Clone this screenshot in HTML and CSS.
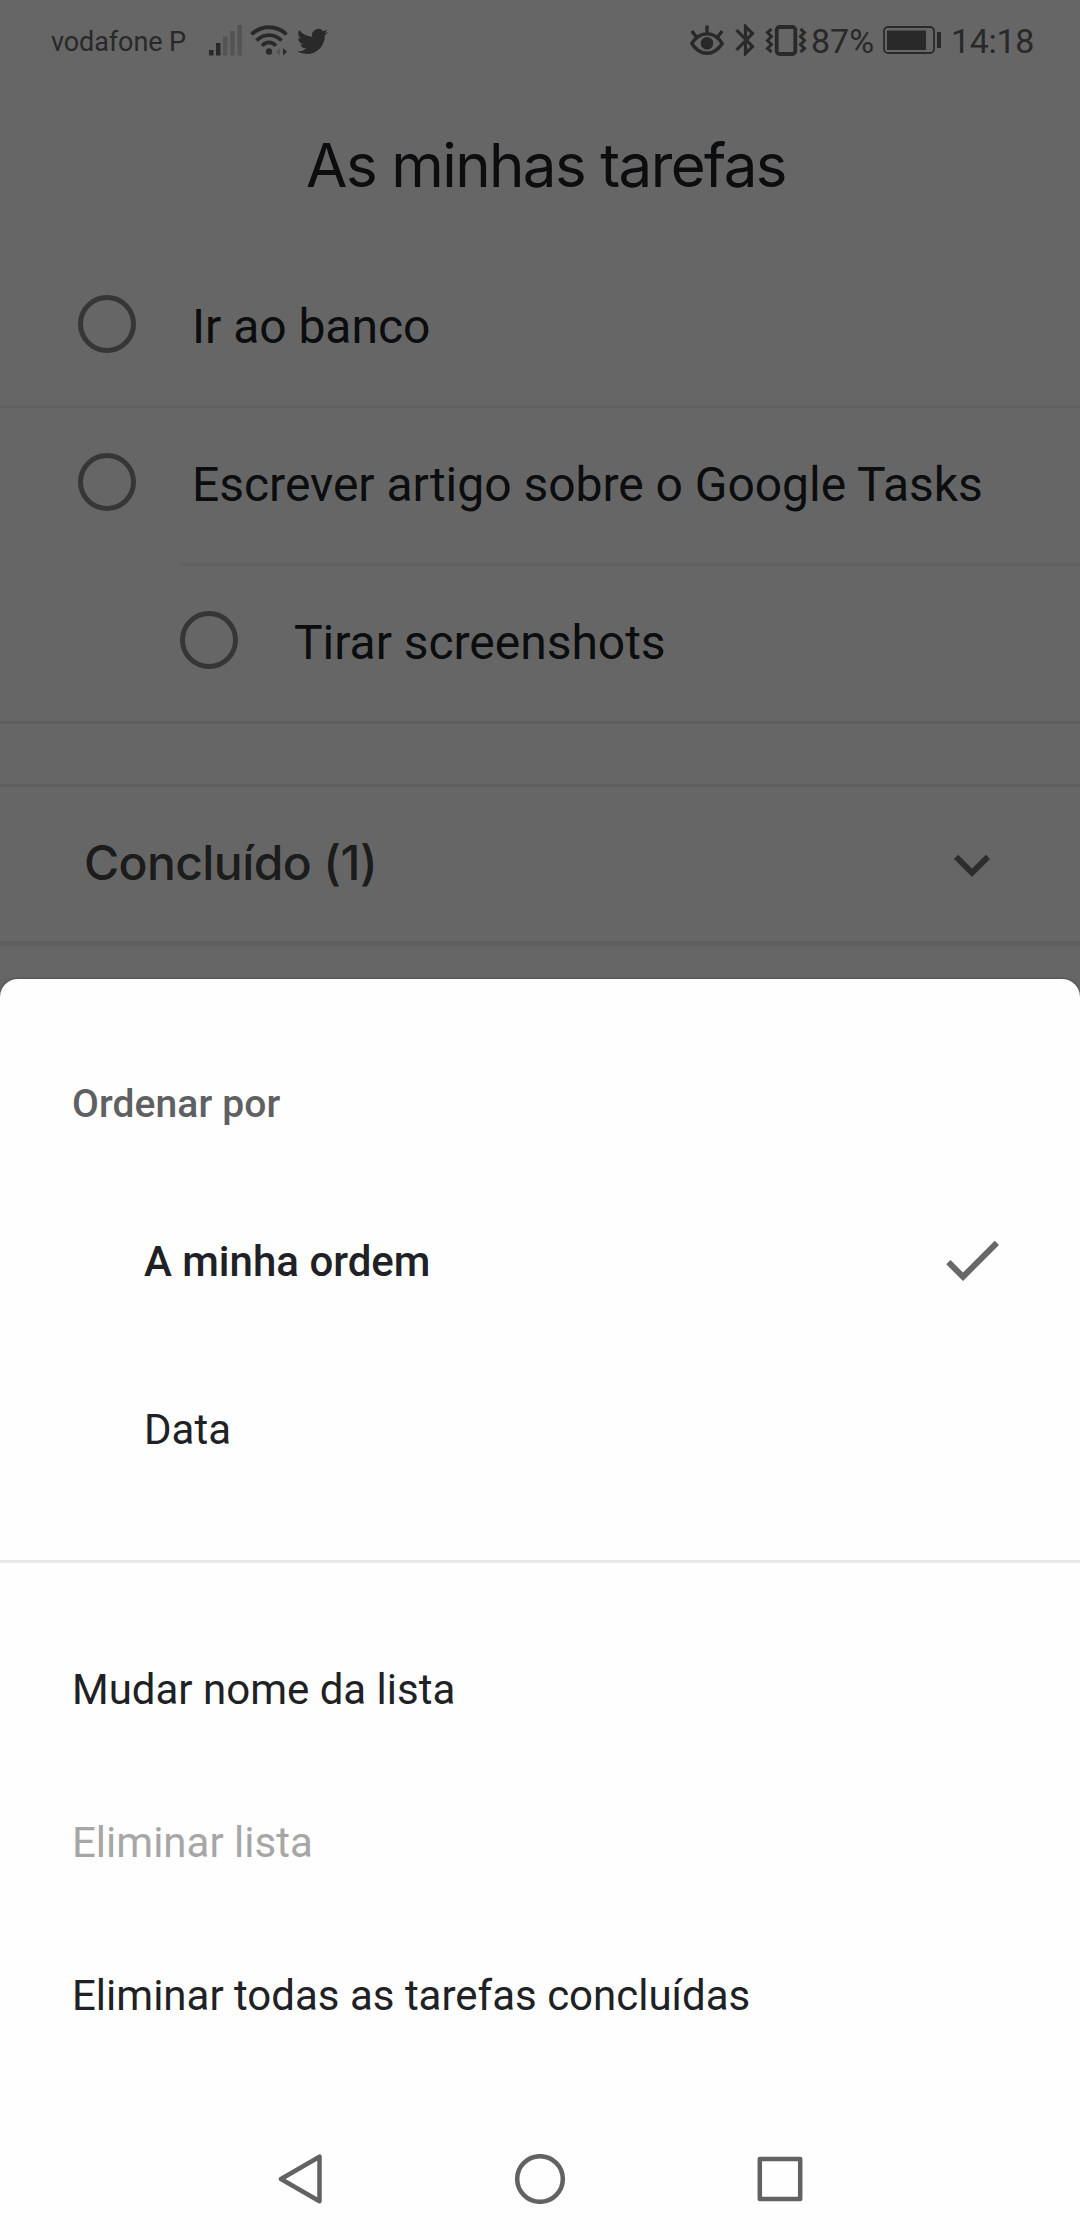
FILE: index.html
```html
<!DOCTYPE html>
<html lang="pt">
<head>
  <meta charset="UTF-8">
  <meta name="viewport" content="width=device-width, initial-scale=1.0">
  <title>As minhas tarefas</title>
  <link rel="stylesheet" href="styles.css">
</head>
<body>
  <div class="screen">
    <!-- Status bar -->
    <div class="status-bar">
      <span class="carrier">vodafone P</span>
      <svg class="signal" width="34" height="32" viewBox="0 0 34 32">
        <path d="M0 26h4.500v5.500H0zM7 19h4.500v12.500H7z"/>
        <path opacity=".3" d="M14 12.500h4.500v19H14zM21.200 7h4.500v24.500h-4.500zM28.500 1H33v30.500h-4.500z"/>
      </svg>
      <svg class="wifi" width="38" height="32" viewBox="0 0 38 32">
        <g fill="none" stroke="currentColor" stroke-width="3.800">
          <path d="M1.500 10.500C11 .8 27 .8 36.500 10.500"/>
          <path d="M6.500 16.500C13.500 9.200 24.500 9.200 31.500 16.500"/>
          <path d="M12 21.800C16 17.200 22 17.200 26 21.800"/>
        </g>
        <circle cx="19" cy="27.500" r="3.200"/>
        <path d="M33 24l4 3.700-4 3.700z"/>
        <path opacity=".3" d="M30 24l-4 3.700 4 3.700z"/>
      </svg>
      <svg class="twitter" width="31" height="27" viewBox="0 2 24 20">
        <path d="M23.950 4.570a10 10 0 0 1-2.820.770 4.960 4.960 0 0 0 2.160-2.720c-.95.550-2 .950-3.130 1.180a4.920 4.920 0 0 0-8.380 4.480C7.690 8.090 4.070 6.130 1.640 3.160a4.900 4.900 0 0 0-.670 2.480c0 1.710.87 3.210 2.190 4.100a4.900 4.900 0 0 1-2.230-.620v.060a4.920 4.920 0 0 0 3.950 4.830 5 5 0 0 1-2.210.080 4.940 4.940 0 0 0 4.600 3.420A9.870 9.870 0 0 1 0 19.540a14 14 0 0 0 7.550 2.210c9.050 0 14-7.500 14-13.980 0-.210 0-.420-.020-.630a9.900 9.900 0 0 0 2.420-2.570z"/>
      </svg>
      <svg class="eye" width="34" height="31" viewBox="0 0 34 31">
        <path fill="none" stroke="currentColor" stroke-width="3.400" d="M1.800 18.500C10 5.500 24 5.500 32.200 18.500 24 31.500 10 31.500 1.800 18.500zM17 8V.5M6 11.500L1.800 6M28 11.500L32.200 6"/>
        <circle cx="17" cy="18.200" r="6.300"/>
      </svg>
      <svg class="bluetooth" width="20" height="32" viewBox="0 0 20 32">
        <path fill="none" stroke="currentColor" stroke-width="3.200" d="M1.500 6l16 16.500-7 7V2.500l7 7L1.500 26"/>
      </svg>
      <svg class="vibrate" width="42" height="31" viewBox="0 0 42 31">
        <rect x="11.700" y="2" width="18.600" height="27" rx="3" fill="none" stroke="currentColor" stroke-width="3.800"/>
        <path fill="none" stroke="currentColor" stroke-width="3" d="M6.500 4L2.500 7.500l4 4-4 4 4 4-4 4 4 3.500M35.500 4l4 3.500-4 4 4 4-4 4 4 4-4 3.500"/>
      </svg>
      <span class="percent">87%</span>
      <svg class="battery" width="58" height="28" viewBox="0 0 58 28">
        <rect x="1" y="1" width="50" height="26" rx="4" fill="none" stroke="currentColor" stroke-width="1.800"/>
        <path d="M4 4.500h39v19.500H4zM54 6h4v16h-4z"/>
      </svg>
      <span class="clock">14:18</span>
    </div>

    <!-- Task list -->
    <h1 class="title">As minhas tarefas</h1>
    <ul class="tasks">
      <li class="task"><span class="radio"></span><span class="name">Ir ao banco</span></li>
      <li class="task"><span class="radio"></span><span class="name">Escrever artigo sobre o Google Tasks</span></li>
      <li class="task subtask"><span class="radio"></span><span class="name">Tirar screenshots</span></li>
    </ul>
    <div class="completed">
      <span class="completed-title">Concluído (1)</span>
      <svg width="72" height="72" viewBox="0 0 24 24"><path d="M16.590 8.590L12 13.170 7.410 8.590 6 10l6 6 6-6z"/></svg>
    </div>

    <div class="scrim"></div>

    <!-- Bottom sheet -->
    <div class="sheet">
      <div class="sort">
        <h2 class="sheet-title">Ordenar por</h2>
        <div class="option selected">
          <span>A minha ordem</span>
          <svg width="72" height="72" viewBox="0 0 24 24"><path d="M9 16.170L4.830 12l-1.420 1.410L9 19 21 7l-1.410-1.410z"/></svg>
        </div>
        <div class="option">Data</div>
      </div>
      <div class="actions">
        <div class="action">Mudar nome da lista</div>
        <div class="action disabled">Eliminar lista</div>
        <div class="action">Eliminar todas as tarefas concluídas</div>
      </div>
      <div class="nav-bar">
        <svg width="50" height="50" viewBox="0 0 50 50"><path d="M6 25L44.500 2.700v44.600z"/></svg>
        <svg width="50" height="50" viewBox="0 0 50 50"><circle cx="25" cy="25" r="22.800"/></svg>
        <svg width="50" height="50" viewBox="0 0 50 50"><rect x="4.800" y="5" width="40.400" height="40"/></svg>
      </div>
    </div>
  </div>
</body>
</html>
```

FILE: styles.css
```css
* {
  box-sizing: border-box;
}
body {
  margin: 0;
  font-family: Roboto, "Liberation Sans", sans-serif;
  color: #202124;
}
.screen {
  position: relative;
  width: 1080px;
  height: 2240px;
  overflow: hidden;
  background: #fff;
}
svg {
  display: block;
  flex: none;
  fill: currentColor;
}

/* Status bar */
.status-bar {
  display: flex;
  align-items: center;
  height: 80px;
  padding: 0 46px 0 51px;
  color: #666;
  white-space: nowrap;
}
.carrier {
  width: 158px;
  font-size: 27px;
  letter-spacing: -0.1px;
  padding-top: 3px;
}
.wifi {
  margin-left: 7px;
}
.twitter {
  margin-left: 9px;
  margin-top: 2px;
}
.eye {
  margin-left: auto;
}
.bluetooth {
  margin-left: 11px;
}
.vibrate {
  margin-left: 10px;
}
.percent, .clock {
  font-size: 34px;
  padding-top: 2px;
}
.percent {
  width: 72px;
  margin-left: 4px;
}
.clock {
  width: 83px;
  margin-left: 10px;
  letter-spacing: -0.3px;
}

/* Task list */
.title {
  margin: 0;
  height: 168px;
  padding-left: 12px;
  font: 400 60px/170px Inter, Roboto, sans-serif;
  letter-spacing: -1.6px;
  text-align: center;
}
.tasks {
  list-style: none;
  margin: 0;
  padding: 0;
  border-bottom: 3px solid #eaeaea;
}
.task {
  display: flex;
  align-items: center;
  height: 157px;
  padding: 0 0 6px 78px;
}
.task + .task {
  height: 158px;
  padding-bottom: 8px;
  border-top: 3px solid #f3f3f3;
}
.task.subtask {
  margin-left: 180px;
  padding-left: 0;
}
.radio {
  width: 58px;
  height: 58px;
  border: 5px solid #878787;
  border-radius: 50%;
}
.name {
  margin-left: 56px;
  font-size: 48px;
  letter-spacing: -0.03px;
  padding-top: 6px;
}
.completed {
  display: flex;
  align-items: center;
  justify-content: space-between;
  height: 162px;
  margin-top: 60px;
  padding: 2px 72px 0 84px;
  border-top: 3px solid #eee;
  border-bottom: 5px solid #eee;
  color: #707070;
}
.completed-title {
  padding-bottom: 5px;
  font: 500 48px Inter, Roboto, sans-serif;
  letter-spacing: -0.6px;
  color: #464646;
}
.scrim {
  position: absolute;
  inset: 0;
  background: rgba(0, 0, 0, 0.6);
}

/* Bottom sheet */
.sheet {
  position: absolute;
  left: 0;
  right: 0;
  bottom: 0;
  height: 1261px;
  background: #fefefe;
  border-radius: 18px 18px 0 0;
  box-shadow: 0 0 3px rgba(0, 0, 0, 0.4);
}
.sort {
  height: 584px;
  padding: 89px 72px 0;
  border-bottom: 3px solid #e8e8e8;
}
.sheet-title {
  margin: 0;
  height: 72px;
  font-size: 39px;
  line-height: 72px;
  font-weight: 500;
  letter-spacing: 0.1px;
  color: #5f6062;
}
.option {
  display: flex;
  align-items: center;
  justify-content: space-between;
  height: 168px;
  padding-left: 72px;
  font-size: 42px;
}
.selected {
  margin-top: 37px;
  font-weight: 500;
}
.selected svg {
  margin-bottom: 2px;
  color: #686868;
}
.actions {
  padding: 50px 72px 0;
}
.action {
  height: 153px;
  line-height: 153px;
  font-size: 42px;
}
.disabled {
  color: #a6a6a6;
}
.nav-bar {
  display: flex;
  justify-content: center;
  gap: 190px;
  margin-top: 82px;
}
.nav-bar svg {
  fill: none;
  stroke: #626262;
  stroke-width: 4.5;
  stroke-linejoin: round;
}
```
